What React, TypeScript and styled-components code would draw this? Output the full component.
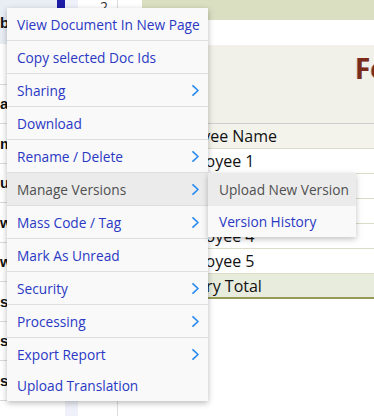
import React from "react";
import styled, { createGlobalStyle } from "styled-components";

const Global = createGlobalStyle`
	html, body {
		margin: 0;
		padding: 0;
		background: #ffffff;
	}
	body {
		font-family: "Open Sans", "Noto Sans", sans-serif;
	}
`;

const Page = styled.div`
	position: relative;
	width: 374px;
	height: 416px;
	overflow: hidden;
	display: flex;
	background: #ffffff;
`;

/* ---------- left document list (mostly hidden behind the menu) ---------- */

const DocList = styled.div`
	width: 117px;
	flex: none;
	display: flex;
	flex-direction: column;
	border-right: 1px solid #dddddd;
`;

const DocRow = styled.div<{ $h: number; $first?: boolean }>`
	height: ${(p) => p.$h}px;
	flex: none;
	display: grid;
	grid-template-columns: 57px 8px 13px 1fr;
	border-bottom: 1px solid ${(p) => (p.$first ? "transparent" : "#d9d9d9")};
	box-sizing: border-box;
`;

const NameCell = styled.div<{ $first?: boolean }>`
	display: flex;
	align-items: center;
	background: ${(p) => (p.$first ? "#e9eef5" : "transparent")};
`;

const NameClip = styled.span`
	width: 7px;
	overflow: hidden;
	white-space: nowrap;
	font-family: "Liberation Sans", Arial, sans-serif;
	font-weight: 700;
	font-size: 15px;
	color: #111111;
`;

const Gutter = styled.div<{ $first?: boolean }>`
	background: ${(p) => (p.$first ? "#1c1ca6" : "transparent")};
`;

const Stripe = styled.div`
	background: #eef1f9;
`;

const NumCell = styled.div`
	display: flex;
	justify-content: flex-end;
	align-items: flex-start;
	padding-right: 9px;
	font-size: 14px;
	line-height: 1;
	color: #333333;
	overflow: hidden;
`;

const Spacer = styled.div`
	width: 24px;
	flex: none;
`;

/* ---------- report panel ---------- */

const Report = styled.div`
	flex: 1;
	min-width: 0;
	display: flex;
	flex-direction: column;
	overflow: hidden;
`;

const Band = styled.div`
	height: 20px;
	flex: none;
	background: #d9dfc0;
`;

const BandGap = styled.div`
	height: 25px;
	flex: none;
	background: #ffffff;
`;

const TitleArea = styled.div`
	height: 78px;
	flex: none;
	background: #f1f1e9;
	padding-left: 213px;
	box-sizing: border-box;
	white-space: nowrap;
	overflow: hidden;
`;

const Title = styled.h1`
	margin: 0;
	padding-top: 4px;
	font-size: 28px;
	font-weight: 700;
	line-height: 38px;
	color: #7b2b17;
	text-shadow: -1px 0 rgba(70, 90, 200, 0.35);
`;

const Table = styled.div`
	display: flex;
	flex-direction: column;
	border-top: 1px solid #cfcfcf;
`;

const TRow = styled.div<{ $bg: string; $indent: number; $strong?: boolean }>`
	height: 25px;
	flex: none;
	box-sizing: border-box;
	display: flex;
	align-items: center;
	padding-left: ${(p) => p.$indent}px;
	background: ${(p) => p.$bg};
	border-bottom: ${(p) => (p.$strong ? "2px solid #979a58" : "1px solid #dcdcc8")};
	font-size: 16px;
	color: #111111;
	white-space: nowrap;
`;

/* ---------- context menu ---------- */

const Menu = styled.ul`
	position: absolute;
	left: 7px;
	top: 8px;
	width: 201px;
	margin: 0;
	padding: 0;
	list-style: none;
	background: #f9f9f9;
	box-shadow: 0 2px 6px rgba(0, 0, 0, 0.28);
	z-index: 5;
`;

const Item = styled.li<{ $active?: boolean; $last?: boolean; $h?: number }>`
	height: ${(p) => p.$h ?? 33}px;
	box-sizing: border-box;
	display: flex;
	align-items: center;
	justify-content: space-between;
	padding: 0 9px 0 10px;
	font-size: 13.7px;
	color: ${(p) => (p.$active ? "#505050" : "#2a38c4")};
	background: ${(p) => (p.$active ? "#ebebeb" : "transparent")};
	border-bottom: 1px solid ${(p) => (p.$last ? "transparent" : "#dedede")};
	white-space: nowrap;
	cursor: pointer;
`;

const SubMenu = styled.ul`
	position: absolute;
	left: 208px;
	top: 173px;
	width: 148px;
	margin: 0;
	padding: 0;
	list-style: none;
	background: #f9f9f9;
	box-shadow: 0 2px 6px rgba(0, 0, 0, 0.25);
	z-index: 6;
`;

const SubItem = styled.li<{ $active?: boolean }>`
	height: ${(p) => (p.$active ? 33 : 31)}px;
	display: flex;
	align-items: center;
	padding-left: 11px;
	font-size: 13.7px;
	color: ${(p) => (p.$active ? "#505050" : "#2a38c4")};
	background: ${(p) => (p.$active ? "#ebebeb" : "transparent")};
	white-space: nowrap;
`;

function Chevron() {
	return (
		<svg width="7" height="11" viewBox="0 0 7 11" fill="none">
			<polyline
				points="1,0.8 6,5.5 1,10.2"
				stroke="#2b8cf0"
				strokeWidth="1.7"
				strokeLinecap="round"
				strokeLinejoin="round"
			/>
		</svg>
	);
}

const docRows = [
	{ h: 45, name: "b", first: true },
	{ h: 39.5, name: "" },
	{ h: 39.5, name: "a" },
	{ h: 39.5, name: "m" },
	{ h: 39.5, name: "u" },
	{ h: 39.5, name: "w" },
	{ h: 39.5, name: "w" },
	{ h: 39.5, name: "s" },
	{ h: 39.5, name: "s" },
	{ h: 39.5, name: "s" },
	{ h: 20, name: "" },
];

const menuItems = [
	{ label: "View Document In New Page" },
	{ label: "Copy selected Doc Ids" },
	{ label: "Sharing", sub: true },
	{ label: "Download" },
	{ label: "Rename / Delete", sub: true },
	{ label: "Manage Versions", sub: true, active: true },
	{ label: "Mass Code / Tag", sub: true },
	{ label: "Mark As Unread" },
	{ label: "Security", sub: true },
	{ label: "Processing", sub: true },
	{ label: "Export Report", sub: true, last: true },
	{ label: "Upload Translation", last: true, h: 30 },
];

export default function App() {
	return (
		<>
			<Global />
			<Page>
				<DocList>
					{docRows.map((r, i) => (
						<DocRow key={i} $h={r.h} $first={r.first}>
							<NameCell $first={r.first}>
								<NameClip>{r.name}</NameClip>
							</NameCell>
							<Gutter $first={r.first} />
							<Stripe />
							<NumCell>{r.first ? "2" : ""}</NumCell>
						</DocRow>
					))}
				</DocList>
				<Spacer />
				<Report>
					<Band />
					<BandGap />
					<TitleArea>
						<Title>February Payroll Summary</Title>
					</TitleArea>
					<Table>
						<TRow $bg="#f3f3ec" $indent={13}>Employee Name</TRow>
						<TRow $bg="#ffffff" $indent={26}>Employee 1</TRow>
						<TRow $bg="#ffffff" $indent={26}>Employee 2</TRow>
						<TRow $bg="#ffffff" $indent={26}>Employee 3</TRow>
						<TRow $bg="#ffffff" $indent={26}>Employee 4</TRow>
						<TRow $bg="#ffffff" $indent={26}>Employee 5</TRow>
						<TRow $bg="#e8ecdd" $indent={7} $strong>
							Summary Total
						</TRow>
					</Table>
				</Report>

				<Menu>
					{menuItems.map((m) => (
						<Item key={m.label} $active={m.active} $last={m.last} $h={m.h}>
							<span>{m.label}</span>
							{m.sub && <Chevron />}
						</Item>
					))}
				</Menu>

				<SubMenu>
					<SubItem $active>Upload New Version</SubItem>
					<SubItem>Version History</SubItem>
				</SubMenu>
			</Page>
		</>
	);
}
